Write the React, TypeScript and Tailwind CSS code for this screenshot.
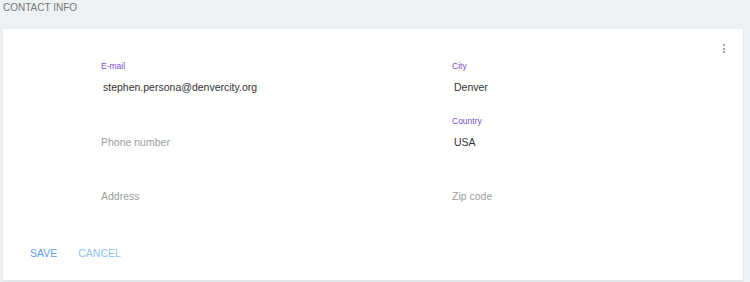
import React from "react";

type Field = { label: string; value?: string };

const left: Field[] = [
  { label: "E-mail", value: "stephen.persona@denvercity.org" },
  { label: "Phone number" },
  { label: "Address" },
];

const right: Field[] = [
  { label: "City", value: "Denver" },
  { label: "Country", value: "USA" },
  { label: "Zip code" },
];

function FormField({ field }: { field: Field }) {
  return (
    <div className="h-[54.5px]">
      <div className="h-[11px] text-[8.5px] leading-[11px] text-[#7b4fd0]">{field.value ? field.label : ""}</div>
      <div className="mt-[7px] text-[10.5px] leading-[16px]">
        {field.value ? (
          <span className="pl-[2px] text-[#333333]">{field.value}</span>
        ) : (
          <span className="text-[#9e9e9e]">{field.label}</span>
        )}
      </div>
    </div>
  );
}

export default function App() {
  return (
    <div className="h-[282px] w-[750px] overflow-hidden bg-[#eef1f4] px-[3px] font-['Liberation_Sans',Arial,sans-serif]">
      <div className="h-[29px] pt-[1px] text-[10px] leading-[13px] text-[#777777]">CONTACT INFO</div>
      <div className="relative h-[251px] w-[740px] bg-white pt-[32px] shadow-[0_1px_2px_rgba(0,0,0,0.08)]">
        <button className="absolute right-[17px] top-[14px] flex flex-col items-center gap-[1.6px] p-[1px]">
          <span className="h-[2px] w-[2px] rounded-full bg-[#8a8a8a]" />
          <span className="h-[2px] w-[2px] rounded-full bg-[#8a8a8a]" />
          <span className="h-[2px] w-[2px] rounded-full bg-[#8a8a8a]" />
        </button>
        <div className="flex pl-[98px]">
          <div className="w-[351px]">
            {left.map((f) => (
              <FormField key={f.label} field={f} />
            ))}
          </div>
          <div className="flex-1">
            {right.map((f) => (
              <FormField key={f.label} field={f} />
            ))}
          </div>
        </div>
        <div className="mt-[20px] flex gap-[21px] pl-[27px] text-[10.5px] leading-[16px]">
          <button className="text-[#5c9ee8]">SAVE</button>
          <button className="text-[#90c1f3]">CANCEL</button>
        </div>
      </div>
    </div>
  );
}
